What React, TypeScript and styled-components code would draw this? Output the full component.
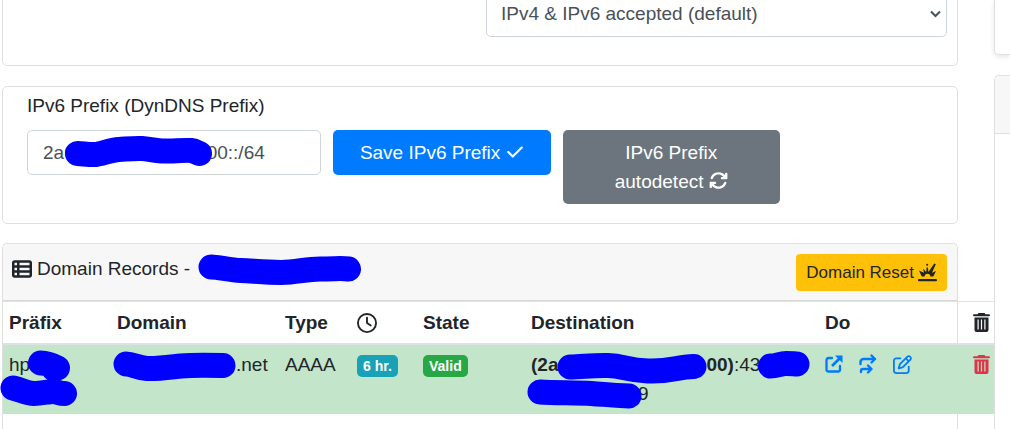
import React from "react";
import styled, { createGlobalStyle, css } from "styled-components";
import {
  FaArrowsRotate,
  FaCheck,
  FaRegClock,
  FaRegPenToSquare,
  FaTableList,
} from "react-icons/fa6";

const GlobalStyle = createGlobalStyle`
  *, *::before, *::after { box-sizing: border-box; }
  body {
    margin: 0;
    background: #fff;
    color: #212529;
    font-family: "Liberation Sans", Arial, sans-serif;
    font-size: 19px;
    line-height: 29px;
    overflow-x: hidden;
  }
`;

const Page = styled.div`
  display: grid;
  grid-template-columns: minmax(0, 1fr) 16px;
  column-gap: 36px;
  min-height: 100vh;
  padding-left: 2px;
`;

const Main = styled.main`
  min-width: 0;
  display: flex;
  flex-direction: column;
`;

const Card = styled.section`
  border: 1px solid #dfdfdf;
  border-radius: 5px;
  background: #fff;
`;

const ProtocolCard = styled(Card)`
  display: grid;
  grid-template-columns: 1fr 1fr;
  gap: 12px;
  padding: 0 10px 28px;
  margin-bottom: 20px;
  border-top: 0;
  border-radius: 0 0 5px 5px;
`;

const control = css`
  height: 45px;
  width: 100%;
  border: 1px solid #ced4da;
  border-radius: 5px;
  background: #fff;
  color: #495057;
  font: inherit;
`;

const SelectWrap = styled.div`
  position: relative;
  grid-column: 2;
  margin-top: -8px;
`;

const Select = styled.select`
  ${control}
  display: block;
  padding: 0 32px 2px 14px;
  appearance: none;
`;

const Chevron = styled.svg`
  position: absolute;
  right: 6px;
  top: 18px;
  width: 11px;
  height: 8px;
  pointer-events: none;
`;

const PrefixCard = styled(Card)`
  padding: 4px 24px 19px;
  margin-bottom: 19px;
`;

const Label = styled.label`
  display: block;
  margin-bottom: 10px;
`;

const PrefixRow = styled.div`
  display: grid;
  grid-template-columns: repeat(12, minmax(0, 1fr));
  gap: 12px;
  align-items: start;
`;

const Cell = styled.div<{ $span: number }>`
  grid-column: span ${(p) => p.$span};
  position: relative;
`;

const Input = styled.input`
  ${control}
  display: block;
  padding: 0 15px;
`;

const Button = styled.button<{ $tone: "primary" | "secondary" }>`
  display: block;
  width: 100%;
  padding: 8px 20px;
  border: 0;
  border-radius: 5px;
  background: ${(p) => (p.$tone === "primary" ? "#007bff" : "#6c757d")};
  color: #fff;
  font: inherit;
  cursor: pointer;

  svg {
    vertical-align: -2px;
  }
`;

const RecordsCard = styled(Card)`
  flex: 1;
  border-bottom: 0;
  border-radius: 5px 5px 0 0;
`;

const CardHeader = styled.header`
  display: flex;
  justify-content: space-between;
  align-items: flex-start;
  padding: 10px 10px 9px 9px;
  border-bottom: 1px solid #d8d8d8;
  border-radius: 5px 5px 0 0;
  background: #f7f7f7;
`;

const Title = styled.h2`
  display: flex;
  align-items: center;
  gap: 5px;
  margin: 0;
  font-size: 19px;
  font-weight: 400;
`;

const ResetButton = styled.button`
  display: flex;
  align-items: center;
  gap: 4px;
  height: 37px;
  padding: 0 10px;
  border: 0;
  border-radius: 4px;
  background: #ffc107;
  color: #212529;
  font: inherit;
  font-size: 17px;
  cursor: pointer;
`;

const Table = styled.table`
  width: calc(100% + 37px);
  table-layout: fixed;
  border-collapse: separate;
  border-spacing: 0;
`;

const Col = styled.col<{ $width?: number }>`
  width: ${(p) => (p.$width ? `${p.$width}px` : "auto")};
`;

const Th = styled.th`
  padding: 6px;
  border-top: 1px solid #dee2e6;
  border-bottom: 2px solid #dee2e6;
  text-align: left;
  white-space: nowrap;

  > svg {
    display: block;
  }
`;

const Td = styled.td`
  padding: 5px 6px 6px;
  background: #c3e6cb;
  vertical-align: top;
  white-space: nowrap;
`;

const Badge = styled.span<{ $tone: "info" | "success" }>`
  display: inline-block;
  padding: 0 6px;
  border-radius: 5px;
  background: ${(p) => (p.$tone === "info" ? "#17a2b8" : "#28a745")};
  color: #fff;
  font-size: 14px;
  font-weight: 700;
  line-height: 22px;
`;

const Actions = styled.div`
  display: flex;
  align-items: center;
  gap: 16px;
  height: 28px;
`;

const IconLink = styled.a<{ $danger?: boolean }>`
  display: flex;
  align-items: center;
  height: 28px;
  color: ${(p) => (p.$danger ? "#dc3545" : "#007bff")};

  svg {
    flex: none;
  }
`;

const Aside = styled.aside`
  display: flex;
  flex-direction: column;
  gap: 20px;
`;

const SideCard = styled.section`
  height: 55px;
  border: solid #dfdfdf;
  border-width: 0 0 1px 1px;
  border-radius: 0 0 0 5px;
  box-shadow: 0 2px 5px rgba(0, 0, 0, 0.1);
`;

const SidePanel = styled.section`
  flex: 1;
  border: solid #dfdfdf;
  border-width: 1px 0 0 1px;
  border-radius: 5px 0 0 0;
`;

const SideHeader = styled.header`
  height: 58px;
  border-bottom: 1px solid #dfdfdf;
  border-radius: 4px 0 0 0;
  background: #f7f7f7;
`;

const Covered = styled.span<{ $width: number }>`
  display: inline-block;
  width: ${(p) => p.$width}px;
  height: 29px;
  position: relative;
  vertical-align: top;
`;

const Marker = styled.svg`
  position: absolute;
  left: 0;
  top: 0;
  width: 1px;
  height: 1px;
  overflow: visible;
  pointer-events: none;
  fill: none;
  stroke: #00f;
  stroke-width: 25;
  stroke-linecap: round;
  stroke-linejoin: round;
`;

const Stroke = ({ d }: { d: string }) => (
  <Marker aria-hidden="true">
    <path d={d} />
  </Marker>
);

const TrashIcon = () => (
  <svg width="17" height="19" viewBox="0 0 17 19" fill="currentColor">
    <path d="M5.500 0h6l1 1.300H16a.9.9 0 0 1 0 2H1a.9.9 0 0 1 0-2h3.500z" />
    <path
      fillRule="evenodd"
      d="M1.500 4.500h14V17a2 2 0 0 1-2 2h-10a2 2 0 0 1-2-2zM4.500 6.500v10h1.200v-10zM7.900 6.500v10h1.200v-10zM11.300 6.500v10h1.200v-10z"
    />
  </svg>
);

const ExplosionIcon = () => (
  <svg width="19" height="19" viewBox="0 0 19 19" fill="currentColor">
    <path d="M1 7.500L6 9.800L5 5.500L8.200 9L8.600 4.500h1.300L10.400 9L16.300 0.500L17.800 1.300L14 9.800L18 8L15.300 13.500H12.300a2.800 2.800 0 0 0-5.600 0H3.700z" />
    <circle cx="9.200" cy="1.800" r="1" />
    <rect x="0" y="16" width="19" height="2.200" rx="1" />
  </svg>
);

const ExternalIcon = () => (
  <svg
    width="18"
    height="18"
    viewBox="0 0 18 18"
    fill="none"
    stroke="currentColor"
    strokeWidth="2.300"
  >
    <path
      d="M7 3H3.500A2 2 0 0 0 1.500 5v9.500a2 2 0 0 0 2 2H13a2 2 0 0 0 2-2V11"
      strokeLinecap="round"
    />
    <path d="M7 11l8-8" strokeWidth="2.700" />
    <path d="M10 0.500h7.500V8z" fill="currentColor" stroke="none" />
  </svg>
);

const ForwardIcon = () => (
  <svg
    width="18"
    height="20"
    viewBox="0 0 18 20"
    fill="none"
    stroke="currentColor"
    strokeWidth="2.400"
    strokeLinecap="round"
    strokeLinejoin="round"
  >
    <path d="M1.500 10V8a3 3 0 0 1 3-3H16M12.500 1.500L16 5l-3.500 3.500" />
    <path d="M2 18v-1a2 2 0 0 1 2-2h8M9 11.500l3.500 3.500L9 18.500" />
  </svg>
);

export default function App() {
  return (
    <>
      <GlobalStyle />
      <Page>
        <Main>
          <ProtocolCard>
            <SelectWrap>
              <Select aria-label="Accepted protocols" defaultValue="both">
                <option value="both">IPv4 &amp; IPv6 accepted (default)</option>
              </Select>
              <Chevron viewBox="0 0 11 8" fill="none" stroke="#495057" strokeWidth="2">
                <path d="M1 1.500L5.500 6L10 1.500" />
              </Chevron>
            </SelectWrap>
          </ProtocolCard>

          <PrefixCard>
            <Label htmlFor="prefix">IPv6 Prefix (DynDNS Prefix)</Label>
            <PrefixRow>
              <Cell $span={4}>
                <Input id="prefix" defaultValue={"2a0" + "\u00a0".repeat(25) + "00::/64"} />
                <Stroke d="M50.500 23.500C58 24 64 25 69 24.500S84 20 92 19.500S108 18 115 18.500S130 21 138 21S160 20 164 20.500S169 22 172.500 23.500" />
              </Cell>
              <Cell $span={3}>
                <Button type="button" $tone="primary">
                  Save IPv6 Prefix <FaCheck size={18} />
                </Button>
              </Cell>
              <Cell $span={3}>
                <Button type="button" $tone="secondary">
                  IPv6 Prefix autodetect <FaArrowsRotate size={19} />
                </Button>
              </Cell>
            </PrefixRow>
          </PrefixCard>

          <RecordsCard>
            <CardHeader>
              <Title>
                <FaTableList size={20} />
                Domain Records -
                <Covered $width={164}>
                  <Stroke d="M16 13C24 13 34 16 46 16.500S70 18.500 86 18.500S110 15 125 15S146 14 153.500 15" />
                </Covered>
              </Title>
              <ResetButton type="button">
                Domain Reset <ExplosionIcon />
              </ResetButton>
            </CardHeader>
            <Table>
              <colgroup>
                <Col $width={108} />
                <Col $width={168} />
                <Col $width={72} />
                <Col $width={66} />
                <Col $width={108} />
                <Col />
                <Col $width={148} />
                <Col $width={27} />
              </colgroup>
              <thead>
                <tr>
                  <Th>Präfix</Th>
                  <Th>Domain</Th>
                  <Th>Type</Th>
                  <Th aria-label="Time to live">
                    <FaRegClock size={20} />
                  </Th>
                  <Th>State</Th>
                  <Th>Destination</Th>
                  <Th>Do</Th>
                  <Th aria-label="Delete">
                    <TrashIcon />
                  </Th>
                </tr>
              </thead>
              <tbody>
                <tr>
                  <Td>
                    hp
                    <Covered $width={42}>
                      <Stroke d="M10.500 13C17 13 22 15 27.500 18L24 19M-17 38C-8 40 -4 43.500 4 43.500S20 41 24 41.500S30 43.500 34.500 43.500" />
                    </Covered>
                    <br />
                    <Covered $width={70} />
                  </Td>
                  <Td>
                    <Covered $width={119}>
                      <Stroke d="M9 14C16 14 20 18 30 18.500S54 17 64 16S90 15 106 15.500" />
                    </Covered>
                    .net
                  </Td>
                  <Td>AAAA</Td>
                  <Td>
                    <Badge $tone="info">6 hr.</Badge>
                  </Td>
                  <Td>
                    <Badge $tone="success">Valid</Badge>
                  </Td>
                  <Td>
                    <b>
                      (2a
                      <Covered $width={148}>
                        <Stroke d="M12 17C24 17 34 15 50 15.500S68 20 90 21S118 17 136 16.500" />
                      </Covered>
                      00)
                    </b>
                    :43
                    <Covered $width={48}>
                      <Stroke d="M10.500 16C17 16 20 13.500 26 13.500S34 14 37 14" />
                    </Covered>
                    <br />
                    <Covered $width={107}>
                      <Stroke d="M9 13C25 14 45 13.500 60 14.500S80 16 98 17" />
                    </Covered>
                    9
                  </Td>
                  <Td>
                    <Actions>
                      <IconLink href="#open" aria-label="Open">
                        <ExternalIcon />
                      </IconLink>
                      <IconLink href="#forward" aria-label="Forward">
                        <ForwardIcon />
                      </IconLink>
                      <IconLink href="#edit" aria-label="Edit">
                        <FaRegPenToSquare size={19} />
                      </IconLink>
                    </Actions>
                  </Td>
                  <Td>
                    <IconLink href="#delete" aria-label="Delete record" $danger>
                      <TrashIcon />
                    </IconLink>
                  </Td>
                </tr>
              </tbody>
            </Table>
          </RecordsCard>
        </Main>
        <Aside>
          <SideCard />
          <SidePanel>
            <SideHeader />
          </SidePanel>
        </Aside>
      </Page>
    </>
  );
}
